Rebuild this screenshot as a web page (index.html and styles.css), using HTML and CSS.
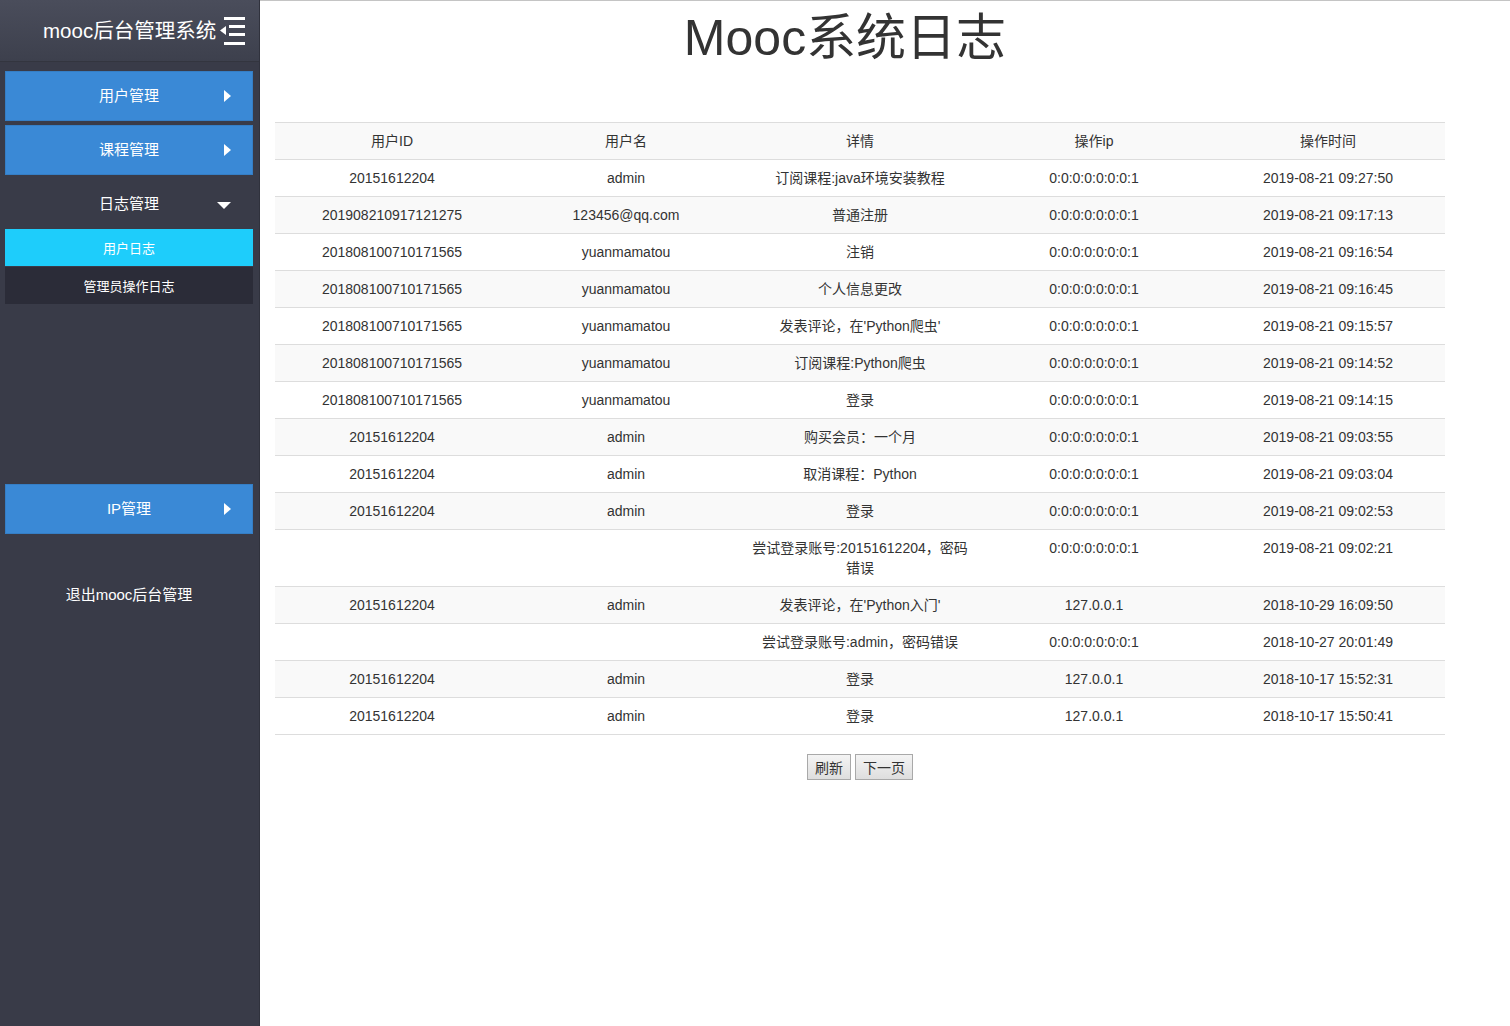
FILE: index.html
```html
<!DOCTYPE html>
<html lang="zh-CN">
<head>
<meta charset="utf-8">
<title>Mooc系统日志</title>
<link rel="stylesheet" href="styles.css">
</head>
<body>
<div class="layout">
  <aside class="sidebar">
    <div class="brand">
      <span class="brand-text">mooc后台管理系统</span>
      <svg class="brand-icon" width="25" height="28" viewBox="0 0 25 28">
        <rect x="4" y="0" width="21" height="3" fill="#fff"/>
        <rect x="9" y="8" width="16" height="3" fill="#fff"/>
        <rect x="9" y="16" width="16" height="3" fill="#fff"/>
        <rect x="4" y="25" width="21" height="3" fill="#fff"/>
        <polygon points="0,13.5 6,9 6,18" fill="#fff"/>
      </svg>
    </div>
    <nav class="menu">
      <div class="menu-item blue"><span></span><span class="label">用户管理</span><i class="caret-right"></i></div>
      <div class="menu-item blue"><span></span><span class="label">课程管理</span><i class="caret-right"></i></div>
      <div class="menu-item open"><span></span><span class="label">日志管理</span><i class="caret-down"></i></div>
      <div class="sub-item active">用户日志</div>
      <div class="sub-item">管理员操作日志</div>
      <div class="menu-item blue ip"><span></span><span class="label">IP管理</span><i class="caret-right"></i></div>
      <div class="logout">退出mooc后台管理</div>
    </nav>
  </aside>
  <main class="main">
    <h1 class="title">Mooc系统日志</h1>
    <table class="log-table">
      <tbody>
        <tr class="head"><th>用户ID</th><th>用户名</th><th>详情</th><th>操作ip</th><th>操作时间</th></tr>
        <tr><td>20151612204</td><td>admin</td><td>订阅课程:java环境安装教程</td><td>0:0:0:0:0:0:0:1</td><td>2019-08-21 09:27:50</td></tr>
        <tr><td>201908210917121275</td><td>123456@qq.com</td><td>普通注册</td><td>0:0:0:0:0:0:0:1</td><td>2019-08-21 09:17:13</td></tr>
        <tr><td>201808100710171565</td><td>yuanmamatou</td><td>注销</td><td>0:0:0:0:0:0:0:1</td><td>2019-08-21 09:16:54</td></tr>
        <tr><td>201808100710171565</td><td>yuanmamatou</td><td>个人信息更改</td><td>0:0:0:0:0:0:0:1</td><td>2019-08-21 09:16:45</td></tr>
        <tr><td>201808100710171565</td><td>yuanmamatou</td><td>发表评论，在'Python爬虫'</td><td>0:0:0:0:0:0:0:1</td><td>2019-08-21 09:15:57</td></tr>
        <tr><td>201808100710171565</td><td>yuanmamatou</td><td>订阅课程:Python爬虫</td><td>0:0:0:0:0:0:0:1</td><td>2019-08-21 09:14:52</td></tr>
        <tr><td>201808100710171565</td><td>yuanmamatou</td><td>登录</td><td>0:0:0:0:0:0:0:1</td><td>2019-08-21 09:14:15</td></tr>
        <tr><td>20151612204</td><td>admin</td><td>购买会员：一个月</td><td>0:0:0:0:0:0:0:1</td><td>2019-08-21 09:03:55</td></tr>
        <tr><td>20151612204</td><td>admin</td><td>取消课程：Python</td><td>0:0:0:0:0:0:0:1</td><td>2019-08-21 09:03:04</td></tr>
        <tr><td>20151612204</td><td>admin</td><td>登录</td><td>0:0:0:0:0:0:0:1</td><td>2019-08-21 09:02:53</td></tr>
        <tr><td></td><td></td><td>尝试登录账号:20151612204，密码错误</td><td>0:0:0:0:0:0:0:1</td><td>2019-08-21 09:02:21</td></tr>
        <tr><td>20151612204</td><td>admin</td><td>发表评论，在'Python入门'</td><td>127.0.0.1</td><td>2018-10-29 16:09:50</td></tr>
        <tr><td></td><td></td><td>尝试登录账号:admin，密码错误</td><td>0:0:0:0:0:0:0:1</td><td>2018-10-27 20:01:49</td></tr>
        <tr><td>20151612204</td><td>admin</td><td>登录</td><td>127.0.0.1</td><td>2018-10-17 15:52:31</td></tr>
        <tr><td>20151612204</td><td>admin</td><td>登录</td><td>127.0.0.1</td><td>2018-10-17 15:50:41</td></tr>
      </tbody>
    </table>
    <div class="pager">
      <button class="btn">刷新</button>
      <button class="btn">下一页</button>
    </div>
  </main>
</div>
</body>
</html>
```

FILE: styles.css
```css
html, body {
  margin: 0;
  padding: 0;
  background: #fff;
  font-family: "Liberation Sans", "Noto Sans CJK SC", sans-serif;
  color: #333;
}

.layout {
  display: flex;
  min-height: 1026px;
}

.sidebar {
  width: 259px;
  flex: 0 0 259px;
  background: #393b48;
  border-right: 1px solid #30323d;
  min-height: 1026px;
}

.brand {
  height: 62px;
  display: flex;
  align-items: center;
  padding-left: 43px;
  background: linear-gradient(#4a4d5b, #3d404d);
  border-bottom: 1px solid #33353f;
  box-sizing: border-box;
}

.brand-text {
  color: #fff;
  font-size: 20.5px;
  line-height: 28px;
}

.brand-icon {
  display: block;
  margin-left: 4px;
  margin-top: 1px;
}

.menu {
  display: flex;
  flex-direction: column;
  padding: 9px 6px 0 5px;
}

.menu-item {
  height: 50px;
  display: grid;
  grid-template-columns: 1fr auto 1fr;
  align-items: center;
  color: #fff;
  font-size: 15px;
  line-height: 18px;
  margin-bottom: 4px;
}

.menu-item.blue {
  background: #3a89d6;
  box-shadow: inset 0 0 0 1px rgba(0, 0, 0, 0.08);
}

.menu-item.open {
  margin-bottom: 0;
}

.menu-item.ip {
  margin-top: 179px;
}

.caret-right {
  justify-self: end;
  margin-right: 22px;
  width: 0;
  height: 0;
  border-left: 7px solid #fff;
  border-top: 6px solid transparent;
  border-bottom: 6px solid transparent;
}

.caret-down {
  justify-self: end;
  margin-right: 22px;
  margin-top: 3px;
  width: 0;
  height: 0;
  border-top: 7px solid #fff;
  border-left: 7px solid transparent;
  border-right: 7px solid transparent;
}

.sub-item {
  height: 37px;
  display: flex;
  align-items: center;
  justify-content: center;
  color: #fff;
  font-size: 13px;
  background: #2b2c38;
  margin-bottom: 1px;
}

.sub-item.active {
  background: #1ecdfb;
}

.logout {
  color: #fff;
  font-size: 15px;
  text-align: center;
  margin-top: 47px;
  line-height: 20px;
}

.main {
  flex: 1;
  border-top: 1px solid #c4c4c4;
  min-width: 0;
}

.title {
  font-size: 50px;
  font-weight: normal;
  line-height: 55px;
  margin: 10px 80px 0 0;
  text-align: center;
  color: #333;
}

.log-table {
  margin: 56px 0 0 15px;
  width: 1170px;
  border-collapse: collapse;
  table-layout: fixed;
  font-size: 14px;
}

.log-table th,
.log-table td {
  width: 20%;
  padding: 8px;
  line-height: 20px;
  text-align: center;
  vertical-align: top;
  font-weight: normal;
  color: #333;
  border-top: 1px solid #ddd;
}

.log-table tr:nth-child(odd) {
  background: #f9f9f9;
}

.log-table tr:last-child td {
  border-bottom: 1px solid #ddd;
}

.pager {
  display: flex;
  justify-content: center;
  gap: 4px;
  margin: 19px 0 0 15px;
  width: 1170px;
}

.btn {
  height: 26px;
  padding: 0 7px;
  font-family: "Liberation Sans", "Noto Sans CJK SC", sans-serif;
  font-size: 14px;
  color: #333;
  background: linear-gradient(#f4f4f4, #dedede);
  border: 1px solid #a9a9a9;
  border-radius: 0;
  box-sizing: border-box;
}
```
